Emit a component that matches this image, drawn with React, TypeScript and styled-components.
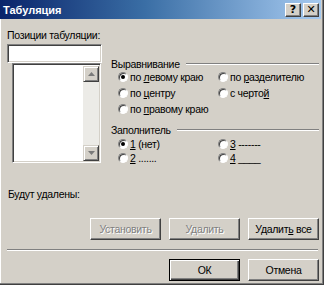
import styled, { createGlobalStyle } from "styled-components";

const Global = createGlobalStyle`
  html, body {
    margin: 0;
    padding: 0;
    background: #d4d0c8;
  }
  body {
    font-family: "Liberation Sans", Arial, sans-serif;
    font-size: 10.5px;
    letter-spacing: -0.3px;
    color: #000;
  }
`;

const Window = styled.div`
  width: 324px;
  height: 285px;
  box-sizing: border-box;
  background: #d4d0c8;
  box-shadow: inset -1px -1px #404040, inset -2px -2px #808080, inset 1px 0 #ffffff;
  display: flex;
  flex-direction: column;
  overflow: hidden;
`;

const TitleBar = styled.div`
  height: 19px;
  margin-right: 3px;
  background: linear-gradient(to right, #0a246a 0%, #3a6ea5 45%, #a6caf0 100%);
  display: flex;
  align-items: center;
  padding: 0 2px 0 3px;
`;

const Title = styled.span`
  flex: 1;
  color: #fff;
  font-weight: bold;
  font-size: 11px;
  letter-spacing: 0;
`;

const CaptionButton = styled.button`
  width: 16px;
  height: 14px;
  margin-left: 2px;
  padding: 0;
  border: 1px solid;
  border-color: #fff #404040 #404040 #fff;
  box-shadow: inset -1px -1px #808080;
  background: #d4d0c8;
  font-family: "DejaVu Sans", sans-serif;
  font-weight: bold;
  font-size: 11px;
  line-height: 11px;
  color: #000;
  display: flex;
  align-items: center;
  justify-content: center;
`;

const Body = styled.div`
  flex: 1;
  padding: 10px 5px 0 7px;
  display: flex;
  flex-direction: column;
`;

const TopRow = styled.div`
  display: flex;
`;

const LeftCol = styled.div`
  width: 95px;
  display: flex;
  flex-direction: column;
`;

const FieldLabel = styled.div`
  height: 13px;
  line-height: 13px;
  margin-bottom: 2px;
  white-space: nowrap;
`;

const sunken = `
  box-sizing: border-box;
  background: #fff;
  border: 1px solid;
  border-color: #808080 #fff #fff #808080;
  box-shadow: inset 1px 1px #404040, inset -1px -1px #d4d0c8;
`;

const TextInput = styled.div`
  ${sunken};
  height: 19px;
  width: 95px;
`;

const ListBox = styled.div`
  ${sunken};
  margin-left: 5px;
  width: 89px;
  height: 100px;
  display: flex;
  justify-content: flex-end;
  padding: 2px 1px 1px 2px;
`;

const ScrollBar = styled.div`
  width: 16px;
  display: flex;
  flex-direction: column;
  justify-content: space-between;
  background: #ecebe7;
`;

const ScrollArrow = styled.div`
  width: 16px;
  height: 16px;
  box-sizing: border-box;
  background: #d4d0c8;
  border: 1px solid;
  border-color: #d4d0c8 #404040 #404040 #d4d0c8;
  box-shadow: inset 1px 1px #fff, inset -1px -1px #808080;
  display: flex;
  align-items: center;
  justify-content: center;
`;

const RightCol = styled.div`
  flex: 1;
  margin-left: 9px;
  padding-top: 28px;
  display: flex;
  flex-direction: column;
`;

const Legend = styled.div<{ $gap?: number }>`
  display: flex;
  align-items: center;
  height: 13px;
  margin-top: ${(p) => p.$gap ?? 0}px;
  white-space: nowrap;
  &::after {
    content: "";
    flex: 1;
    margin-left: 6px;
    border-top: 1px solid #808080;
    border-bottom: 1px solid #fff;
  }
`;

const RadioGrid = styled.div<{ $row: number; $gap: number }>`
  display: grid;
  grid-template-columns: 100px auto;
  grid-auto-rows: ${(p) => p.$row}px;
  margin: ${(p) => p.$gap}px 0 0 7px;
`;

const RadioItem = styled.label`
  display: flex;
  align-items: center;
  white-space: nowrap;
`;

const RadioDot = styled.span<{ $on?: boolean }>`
  width: 10px;
  height: 10px;
  box-sizing: border-box;
  border-radius: 50%;
  margin-right: 2px;
  background: #fff;
  border: 1px solid;
  border-color: #808080 #fff #fff #808080;
  box-shadow: inset 1px 1px #404040;
  position: relative;
  &::after {
    content: "";
    display: ${(p) => (p.$on ? "block" : "none")};
    position: absolute;
    left: 2px;
    top: 2px;
    width: 4px;
    height: 4px;
    border-radius: 50%;
    background: #000;
  }
`;

const Note = styled.div`
  margin-top: 23px;
  height: 13px;
  line-height: 13px;
  margin-left: 1px;
`;

const ButtonRow = styled.div<{ $gap: number }>`
  display: flex;
  justify-content: flex-end;
  gap: 8px;
  margin-top: ${(p) => p.$gap}px;
`;

const Button = styled.button<{ $default?: boolean }>`
  width: 71px;
  height: 22px;
  padding: 0;
  box-sizing: border-box;
  background: #d4d0c8;
  font-family: "Liberation Sans", Arial, sans-serif;
  font-size: 10.5px;
  letter-spacing: -0.3px;
  color: #000;
  border: 1px solid;
  border-color: ${(p) => (p.$default ? "#000" : "#fff #404040 #404040 #fff")};
  box-shadow: ${(p) =>
    p.$default
      ? "inset 1px 1px #fff, inset -1px -1px #404040, inset -2px -2px #808080"
      : "inset -1px -1px #808080"};
  &:disabled {
    color: #808080;
    text-shadow: 1px 1px #fff;
  }
`;

const Separator = styled.div`
  margin-top: 9px;
  margin-right: 1px;
  border-top: 1px solid #808080;
  border-bottom: 1px solid #fff;
`;

function Arrow({ up }: { up?: boolean }) {
  return (
    <svg width="7" height="4" viewBox="0 0 7 4">
      <path d={up ? "M3.5 0 L7 4 L0 4 Z" : "M0 0 L7 0 L3.5 4 Z"} fill="#7a7a7a" />
    </svg>
  );
}

function Radio({ on, children }: { on?: boolean; children: React.ReactNode }) {
  return (
    <RadioItem>
      <RadioDot $on={on} />
      <span>{children}</span>
    </RadioItem>
  );
}

export default function App() {
  return (
    <>
      <Global />
      <Window>
        <TitleBar>
          <Title>Табуляция</Title>
          <CaptionButton>?</CaptionButton>
          <CaptionButton>✕</CaptionButton>
        </TitleBar>
        <Body>
          <TopRow>
            <LeftCol>
              <FieldLabel>Позиции табуляции:</FieldLabel>
              <TextInput />
              <ListBox>
                <ScrollBar>
                  <ScrollArrow><Arrow up /></ScrollArrow>
                  <ScrollArrow><Arrow /></ScrollArrow>
                </ScrollBar>
              </ListBox>
            </LeftCol>
            <RightCol>
              <Legend>Выравнивание</Legend>
              <RadioGrid $row={16} $gap={-1}>
                <Radio on>по <u>л</u>евому краю</Radio>
                <Radio>по <u>р</u>азделителю</Radio>
                <Radio>по <u>ц</u>ентру</Radio>
                <Radio>с черто<u>й</u></Radio>
                <Radio>по <u>п</u>равому краю</Radio>
              </RadioGrid>
              <Legend $gap={6}>Заполнитель</Legend>
              <RadioGrid $row={14} $gap={1}>
                <Radio on><u>1</u> (нет)</Radio>
                <Radio><u>3</u> -------</Radio>
                <Radio><u>2</u> .......</Radio>
                <Radio><u>4</u> ____</Radio>
              </RadioGrid>
            </RightCol>
          </TopRow>
          <Note>Будут удалены:</Note>
          <ButtonRow $gap={17}>
            <Button disabled>Установить</Button>
            <Button disabled>Удалить</Button>
            <Button>Удалит<u>ь</u> все</Button>
          </ButtonRow>
          <Separator />
          <ButtonRow $gap={8}>
            <Button $default>ОК</Button>
            <Button>Отмена</Button>
          </ButtonRow>
        </Body>
      </Window>
    </>
  );
}
